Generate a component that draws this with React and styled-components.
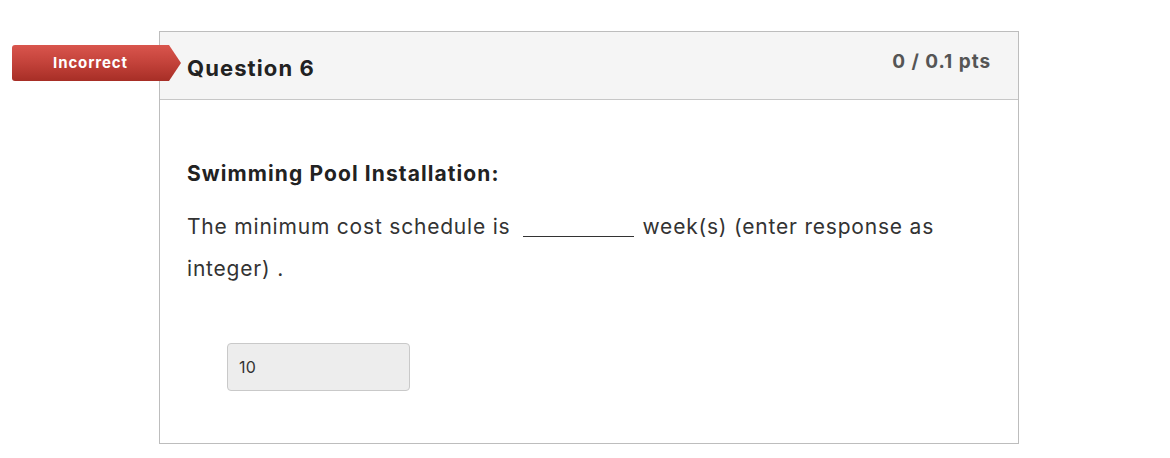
import React from 'react';
import styled, { createGlobalStyle } from 'styled-components';

const GlobalStyle = createGlobalStyle`
  body {
    margin: 0;
    background: #fff;
    font-family: Inter, "Open Sans", Arial, sans-serif;
    color: #333;
    letter-spacing: 0.05em;
  }
`;

const Page = styled.div`
  padding: 31px 0 0 159px;
`;

const Card = styled.div`
  position: relative;
  width: 858px;
  height: 411px;
  border: 1px solid #bdbdbd;
  background: #fff;
`;

const Badge = styled.div`
  position: absolute;
  left: -148px;
  top: 13px;
  width: 169px;
  height: 36px;
  display: flex;
  align-items: center;
  justify-content: center;
  padding: 0 12px 2px 0;
  box-sizing: border-box;
  color: #fff;
  font-size: 15px;
  font-weight: 700;
  letter-spacing: 0.06em;
  border-radius: 3px 0 0 3px;
  background: linear-gradient(to bottom, #d9554d 0%, #c3423a 50%, #a72e26 100%);
  clip-path: polygon(0 0, calc(100% - 12px) 0, 100% 50%, calc(100% - 12px) 100%, 0 100%);
`;

const Header = styled.div`
  height: 67px;
  display: flex;
  justify-content: space-between;
  align-items: flex-start;
  padding: 0 27px;
  background: #f5f5f5;
  border-bottom: 1px solid #c7c7c7;
`;

const Title = styled.h2`
  margin: 21px 0 0;
  font-size: 22px;
  line-height: 30px;
  font-weight: 700;
  letter-spacing: 0.05em;
  color: #222;
`;

const Points = styled.div`
  margin-top: 17px;
  font-size: 19px;
  line-height: 26px;
  font-weight: 700;
  letter-spacing: 0.05em;
  color: #555;
`;

const Body = styled.div`
  padding: 61px 27px 0;
`;

const Heading = styled.p`
  margin: 0 0 19px;
  font-size: 21px;
  font-weight: 700;
  line-height: 26px;
  letter-spacing: 0.052em;
  color: #222;
`;

const Text = styled.p`
  margin: 0;
  font-size: 21px;
  line-height: 42px;
  color: #333;
`;

const Blank = styled.span`
  display: inline-block;
  width: 111px;
  height: 16px;
  margin: 0 9px -3px 12px;
  border-bottom: 1px solid #333;
  vertical-align: baseline;
`;

const Answer = styled.div`
  margin: 53px 0 0 40px;
  width: 183px;
  height: 48px;
  display: flex;
  align-items: center;
  padding-left: 11px;
  box-sizing: border-box;
  background: #ededed;
  border: 1px solid #c9c9c9;
  border-radius: 4px;
  font-size: 16px;
  letter-spacing: 0.02em;
  color: #333;
`;

export default function App() {
  return (
    <Page>
      <GlobalStyle />
      <Card>
        <Badge>Incorrect</Badge>
        <Header>
          <Title>Question 6</Title>
          <Points>0 / 0.1 pts</Points>
        </Header>
        <Body>
          <Heading>Swimming Pool Installation:</Heading>
          <Text>
            The minimum cost schedule is
            <Blank />
            week(s) (enter response as integer) .
          </Text>
          <Answer>10</Answer>
        </Body>
      </Card>
    </Page>
  );
}
